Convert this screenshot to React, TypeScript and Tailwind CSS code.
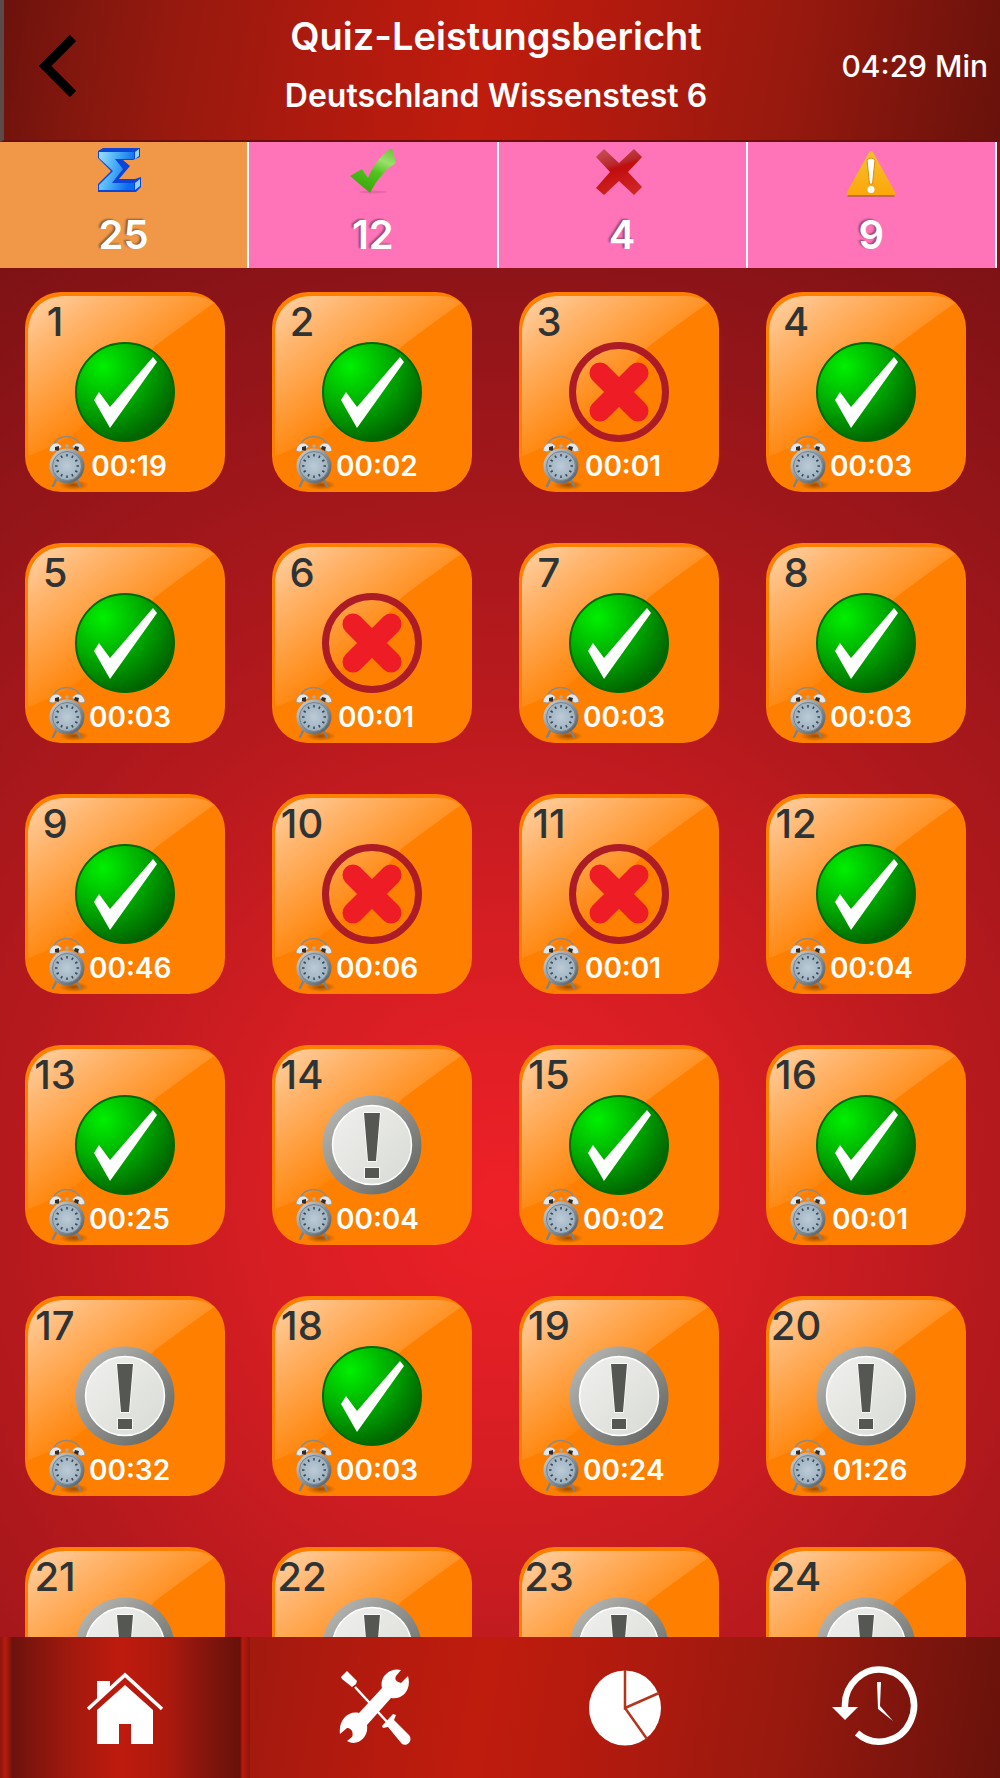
import type { ReactNode } from 'react';

type Result = 'right' | 'wrong' | 'skipped';

const QUESTIONS: { result: Result; time: string }[] = [
  { result: 'right', time: '00:19' },
  { result: 'right', time: '00:02' },
  { result: 'wrong', time: '00:01' },
  { result: 'right', time: '00:03' },
  { result: 'right', time: '00:03' },
  { result: 'wrong', time: '00:01' },
  { result: 'right', time: '00:03' },
  { result: 'right', time: '00:03' },
  { result: 'right', time: '00:46' },
  { result: 'wrong', time: '00:06' },
  { result: 'wrong', time: '00:01' },
  { result: 'right', time: '00:04' },
  { result: 'right', time: '00:25' },
  { result: 'skipped', time: '00:04' },
  { result: 'right', time: '00:02' },
  { result: 'right', time: '00:01' },
  { result: 'skipped', time: '00:32' },
  { result: 'right', time: '00:03' },
  { result: 'skipped', time: '00:24' },
  { result: 'skipped', time: '01:26' },
  { result: 'skipped', time: '' },
  { result: 'skipped', time: '' },
  { result: 'skipped', time: '' },
  { result: 'skipped', time: '' },
];

function SharedGradients() {
  return (
    <svg className="absolute h-0 w-0" aria-hidden="true">
      <defs>
        <linearGradient id="gloss" gradientUnits="userSpaceOnUse" x1="4" y1="4" x2="88" y2="118">
          <stop offset="0" stopColor="#ffd4aa" />
          <stop offset="0.3" stopColor="#ffb873" />
          <stop offset="1" stopColor="#ff8408" />
        </linearGradient>
        <radialGradient id="green" cx="0.28" cy="0.24" r="0.82">
          <stop offset="0" stopColor="#00f000" />
          <stop offset="0.5" stopColor="#00ac00" />
          <stop offset="1" stopColor="#006000" />
        </radialGradient>
        <linearGradient id="ring" x1="0" y1="0" x2="1" y2="1">
          <stop offset="0.1" stopColor="#b4b5b1" />
          <stop offset="0.9" stopColor="#666865" />
        </linearGradient>
        <linearGradient id="plate" x1="0" y1="0" x2="1" y2="1">
          <stop offset="0" stopColor="#f0f1ee" />
          <stop offset="1" stopColor="#d8dad5" />
        </linearGradient>
        <linearGradient id="clockRim" x1="0" y1="0" x2="1" y2="1">
          <stop offset="0" stopColor="#d5d8da" />
          <stop offset="0.5" stopColor="#8d9499" />
          <stop offset="1" stopColor="#4e555a" />
        </linearGradient>
        <radialGradient id="clockFace">
          <stop offset="0" stopColor="#bccbd7" />
          <stop offset="1" stopColor="#9db0bf" />
        </radialGradient>
        <radialGradient id="clockShadow">
          <stop offset="0" stopColor="#5a2c00" stopOpacity="0.6" />
          <stop offset="1" stopColor="#5a2c00" stopOpacity="0" />
        </radialGradient>
      </defs>
    </svg>
  );
}

function ResultIcon({ result }: { result: Result }) {
  if (result === 'right') {
    return (
      <svg viewBox="0 0 100 100" className="h-[100px] w-[100px]" role="img" aria-label="Richtig">
        <circle cx="50" cy="50" r="49" fill="url(#green)" stroke="#006a00" strokeWidth="2" />
        <path d="M19 58L24 50L35 65L78 15L82 20L35 86Z" fill="#fff" />
      </svg>
    );
  }
  if (result === 'wrong') {
    return (
      <svg viewBox="0 0 100 100" className="h-[100px] w-[100px]" role="img" aria-label="Falsch">
        <circle cx="50" cy="50" r="46.5" fill="none" stroke="#ad1c24" strokeWidth="7" />
        <path d="M31 31L69 69M69 31L31 69" stroke="#ee1c25" strokeWidth="21" strokeLinecap="round" />
      </svg>
    );
  }
  return (
    <svg viewBox="0 0 100 100" className="h-[100px] w-[100px]" role="img" aria-label="Offen">
      <circle cx="50" cy="50" r="49.5" fill="url(#ring)" />
      <circle cx="50" cy="50" r="39.5" fill="url(#plate)" stroke="#fff" strokeWidth="1.5" />
      <path d="M42 18H58L54 66H46Z M43 73H57V83H43Z" fill="#555753" stroke="#fff" strokeWidth="1.5" paintOrder="stroke" />
    </svg>
  );
}

const TICKS = [0, 30, 60, 90, 120, 150, 180, 210, 240, 270, 300, 330];

function AlarmClock() {
  return (
    <svg viewBox="0 0 42 56" className="h-[56px] w-[42px]" aria-hidden="true">
      <ellipse cx="27" cy="51" rx="15" ry="5" fill="url(#clockShadow)" />
      <path d="M6 13C8 -1 31 -1 34 13" fill="none" stroke="#8a8a86" strokeWidth="1.3" />
      <path d="M9 46L6 52M30 46L33 52" stroke="#7d8286" strokeWidth="2.4" strokeLinecap="round" />
      <path d="M2 17C3 9 11 6 15 13L6 18Z" fill="#e4e6e8" stroke="#8b8f92" strokeWidth="0.7" />
      <path d="M38 17C37 9 29 6 25 13L34 18Z" fill="#e4e6e8" stroke="#8b8f92" strokeWidth="0.7" />
      <path d="M8 13L12 12L12 17L8 16ZM28 12L32 13L31 17L27 15Z" fill="#2d2d2d" />
      <circle cx="20" cy="12" r="1.8" fill="#aaa" />
      <circle cx="20" cy="32" r="17.5" fill="url(#clockRim)" />
      <circle cx="20" cy="32" r="14.5" fill="url(#clockFace)" stroke="#75858f" strokeWidth="1" />
      {TICKS.map((angle) => (
        <path key={angle} d="M20 20V22.5" stroke="#36444f" strokeWidth="1.5" transform={`rotate(${angle} 20 32)`} />
      ))}
    </svg>
  );
}

function QuestionTile({ number, result, time }: { number: number; result: Result; time: string }) {
  return (
    <button type="button" className="relative block aspect-square w-full overflow-hidden rounded-[36px] bg-[#ff8000] text-left">
      <svg viewBox="0 0 200 200" preserveAspectRatio="none" className="absolute inset-0 h-full w-full" aria-hidden="true">
        <path
          d="M3 164V42C3 18 18 4 40 4H166C177 4 184 7 189 11Q162 30 130 54C108 78 85 115 62 132C45 146 25 156 3 164Z"
          fill="url(#gloss)"
        />
      </svg>
      <span className="relative flex flex-col">
        <span className="h-12 w-[60px] pt-2.5 text-center text-[40px] leading-9 font-medium text-[#2e3436]">{number}</span>
        <span className="self-center">
          <ResultIcon result={result} />
        </span>
        <span className="-mt-2 flex pl-[22px]">
          <AlarmClock />
          <span className="w-20 pt-4 text-center text-[28px] leading-8 font-semibold text-white">{time}</span>
        </span>
      </span>
    </button>
  );
}

function SumIcon() {
  return (
    <svg viewBox="0 0 58 48" className="h-12 w-[58px]" aria-hidden="true">
      <defs>
        <linearGradient id="sum" x1="0" y1="0" x2="1" y2="0.3">
          <stop offset="0" stopColor="#9be0ff" />
          <stop offset="0.5" stopColor="#4aaef5" />
          <stop offset="1" stopColor="#0a6cf0" />
        </linearGradient>
      </defs>
      <path d="M3 5L8 2H45V11L38 14H28L35 20L24 33H40L46 31V41L41 46H3V38L16 25L3 12Z" fill="#0c45d8" />
      <path d="M4 6H39V13H20L28 23L17 37H39V44H4V39L18 25L4 12Z" fill="url(#sum)" />
      <path d="M40 6L44 3V10L40 13ZM40 37L45 33V40L40 44Z" fill="#8fd4ff" />
    </svg>
  );
}

function TickIcon() {
  return (
    <svg viewBox="0 0 48 48" className="h-12 w-12" aria-hidden="true">
      <defs>
        <linearGradient id="tick" x1="0.8" y1="0" x2="0.4" y2="0.9">
          <stop offset="0" stopColor="#6cc93c" />
          <stop offset="0.3" stopColor="#9be06c" />
          <stop offset="0.6" stopColor="#4fc41c" />
          <stop offset="1" stopColor="#3eac10" />
        </linearGradient>
      </defs>
      <ellipse cx="24" cy="46" rx="14" ry="1.5" fill="#8a3060" opacity="0.2" />
      <path d="M1 30L13 23L19 32C24 20 32 8 43 2L47 17C38 22 28 33 21 47Z" fill="url(#tick)" />
    </svg>
  );
}

function CrossIcon() {
  return (
    <svg viewBox="0 0 54 50" className="h-[50px] w-[54px]" aria-hidden="true">
      <defs>
        <linearGradient id="cross" x1="0" y1="0" x2="0.3" y2="1">
          <stop offset="0" stopColor="#c8555a" />
          <stop offset="0.42" stopColor="#b8272a" />
          <stop offset="0.5" stopColor="#c00d0d" />
          <stop offset="1" stopColor="#cf2222" />
        </linearGradient>
      </defs>
      <path d="M1 11L9 3L24 17L39 3L47 11L33 26L47 41L39 49L24 35L9 49L1 42L15 26Z" fill="url(#cross)" />
    </svg>
  );
}

function WarningIcon() {
  return (
    <svg viewBox="0 0 50 52" className="h-[52px] w-[50px]" aria-hidden="true">
      <defs>
        <linearGradient id="warn" x1="0" y1="0" x2="0" y2="1">
          <stop offset="0" stopColor="#f5c02c" />
          <stop offset="1" stopColor="#fba70a" />
        </linearGradient>
      </defs>
      <g transform="translate(0 4)">
        <path d="M25 3L49 47H1Z" fill="#a35a1c" opacity="0.6" />
        <path d="M25 1C26 1 27 2 28 4L49 42C50 44 49 45 47 45H3C1 45 0 44 1 42L22 4C23 2 24 1 25 1Z" fill="url(#warn)" />
        <path d="M21 10Q25 6 29 10L26.500 34H23.500Z" fill="#fff" stroke="#e08a10" strokeWidth="1" />
        <circle cx="25" cy="39.500" r="3.500" fill="#fff" />
      </g>
    </svg>
  );
}

const STATS: { label: string; value: number; icon: ReactNode; tone: string }[] = [
  { label: 'Gesamt', value: 25, icon: <SumIcon />, tone: 'bg-[#f09848]' },
  { label: 'Richtig', value: 12, icon: <TickIcon />, tone: 'bg-[#ff74b8]' },
  { label: 'Falsch', value: 4, icon: <CrossIcon />, tone: 'bg-[#ff74b8]' },
  { label: 'Offen', value: 9, icon: <WarningIcon />, tone: 'bg-[#ff74b8]' },
];

function HomeIcon() {
  return (
    <svg viewBox="0 0 80 76" className="h-[76px] w-20" aria-hidden="true">
      <path d="M12 40L40 15L68 40V74H46V54H34V74H12Z" fill="#fff" />
      <path d="M12 11H25V18L12 30Z" fill="#fff" />
      <path d="M3 39L40 5L77 39" fill="none" stroke="#fff" strokeWidth="3.5" />
    </svg>
  );
}

function ToolsIcon() {
  return (
    <svg viewBox="0 0 72 80" className="h-20 w-[72px]" aria-hidden="true">
      <path d="M16 19L50 56" stroke="#fff" strokeWidth="2.5" />
      <path d="M2 9L8 3L18 13L17 16L13 19L3 11Z" fill="#fff" />
      <path d="M43 58L54 46L57 47L55 52L70 67C74 72 69 79 63 76L49 59L44 60Z" fill="#fff" />
      <path
        d="M62 2C51 -1 40 9 43 20L20 45C9 42 -1 53 1 66L8 60C12 60 15 64 13 69L8 73C18 79 30 70 28 57L52 30C63 32 73 22 69 8L62 15C58 14 55 12 57 8Z"
        fill="#fff"
      />
    </svg>
  );
}

function PieIcon() {
  return (
    <svg viewBox="0 0 74 76" className="h-[76px] w-[74px]" aria-hidden="true">
      <ellipse cx="37" cy="38" rx="36" ry="37.500" fill="#fff" />
      <path d="M37 0V38L71 23M37 38L59 69" fill="none" stroke="#b5351c" strokeWidth="2.5" />
    </svg>
  );
}

function HistoryIcon() {
  return (
    <svg viewBox="0 0 86 84" className="h-[84px] w-[86px]" aria-hidden="true">
      <path d="M13 42A34.500 36 0 1 1 25 67" fill="none" stroke="#fff" strokeWidth="6.500" />
      <path d="M0 41H26L13 54Z" fill="#fff" />
      <path d="M45 16H49L48 40L61 55L46 43Z" fill="#fff" />
    </svg>
  );
}

const TABS: { label: string; icon: ReactNode }[] = [
  { label: 'Startseite', icon: <HomeIcon /> },
  { label: 'Einstellungen', icon: <ToolsIcon /> },
  { label: 'Statistik', icon: <PieIcon /> },
  { label: 'Verlauf', icon: <HistoryIcon /> },
];

export default function App() {
  return (
    <div className="flex h-screen flex-col overflow-hidden bg-[#8b1218] font-['Inter','Liberation_Sans',sans-serif]">
      <SharedGradients />

      <header className="grid h-[142px] shrink-0 grid-cols-[1fr_auto_1fr] items-center border-b-2 border-l-4 border-b-[#6b0f0c] border-l-[#5c4a48] bg-[linear-gradient(100deg,#6b120c_0%,#82170e_8%,#98190e_18%,#b01a0e_34%,#bf1c0d_48%,#b01a0e_62%,#98190e_78%,#7d150d_90%,#68120b_100%)] pr-3 pb-2 text-white">
        <button type="button" aria-label="Zurück" className="pl-[35px]">
          <svg viewBox="0 0 37 62" className="h-[62px] w-[37px]" aria-hidden="true">
            <path d="M34 3L6 31L34 59" fill="none" stroke="#000" strokeWidth="9" />
          </svg>
        </button>
        <div className="text-center font-semibold">
          <h1 className="text-[38px] leading-[60px]">Quiz-Leistungsbericht</h1>
          <h2 className="text-[32px] leading-[60px]">Deutschland Wissenstest 6</h2>
        </div>
        <p className="text-right text-[30px] leading-10 font-medium">04:29 Min</p>
      </header>

      <div className="grid h-[126px] shrink-0 grid-cols-4 pr-[3px]">
        {STATS.map(({ label, value, icon, tone }) => (
          <button
            key={label}
            type="button"
            aria-label={`${label}: ${value}`}
            className={`flex flex-col items-center justify-between border-r-2 border-white pt-1 ${tone}`}
          >
            {icon}
            <span className="text-[40px] leading-[66px] font-semibold text-white [text-shadow:-2px_-1px_2px_rgba(0,0,0,0.4)]">{value}</span>
          </button>
        ))}
      </div>

      <main className="min-h-0 flex-1 overflow-hidden bg-[radial-gradient(ellipse_100%_80%_at_50%_68%,#ee2027_0%,#d61e23_24%,#b4191d_50%,#8d1418_85%,#7c1214_100%)]">
        <div className="grid grid-cols-4 gap-x-[47px] gap-y-[51px] pt-6 pr-[34px] pl-[25px]">
          {QUESTIONS.map(({ result, time }, index) => (
            <QuestionTile key={index} number={index + 1} result={result} time={time} />
          ))}
        </div>
      </main>

      <nav className="grid h-[141px] shrink-0 grid-cols-4 bg-[linear-gradient(100deg,#6b120c_0%,#82170e_8%,#98190e_18%,#b01a0e_34%,#bf1c0d_48%,#b01a0e_62%,#98190e_78%,#7d150d_90%,#68120b_100%)]">
        {TABS.map(({ label, icon }, index) => (
          <a
            key={label}
            href={`#${label.toLowerCase()}`}
            aria-label={label}
            className={
              index === 0
                ? 'flex items-center justify-center bg-[linear-gradient(90deg,#8d150c_0%,#b81a0d_2%,#a5180c_3%,#6b120c_5%,#7d150d_12%,#a5190e_30%,#be1b0d_48%,#ae190d_66%,#85150d_82%,#68110a_96%,#b81a0d_97%,#8d150c_100%)]'
                : 'flex items-center justify-center'
            }
          >
            {icon}
          </a>
        ))}
      </nav>
    </div>
  );
}
